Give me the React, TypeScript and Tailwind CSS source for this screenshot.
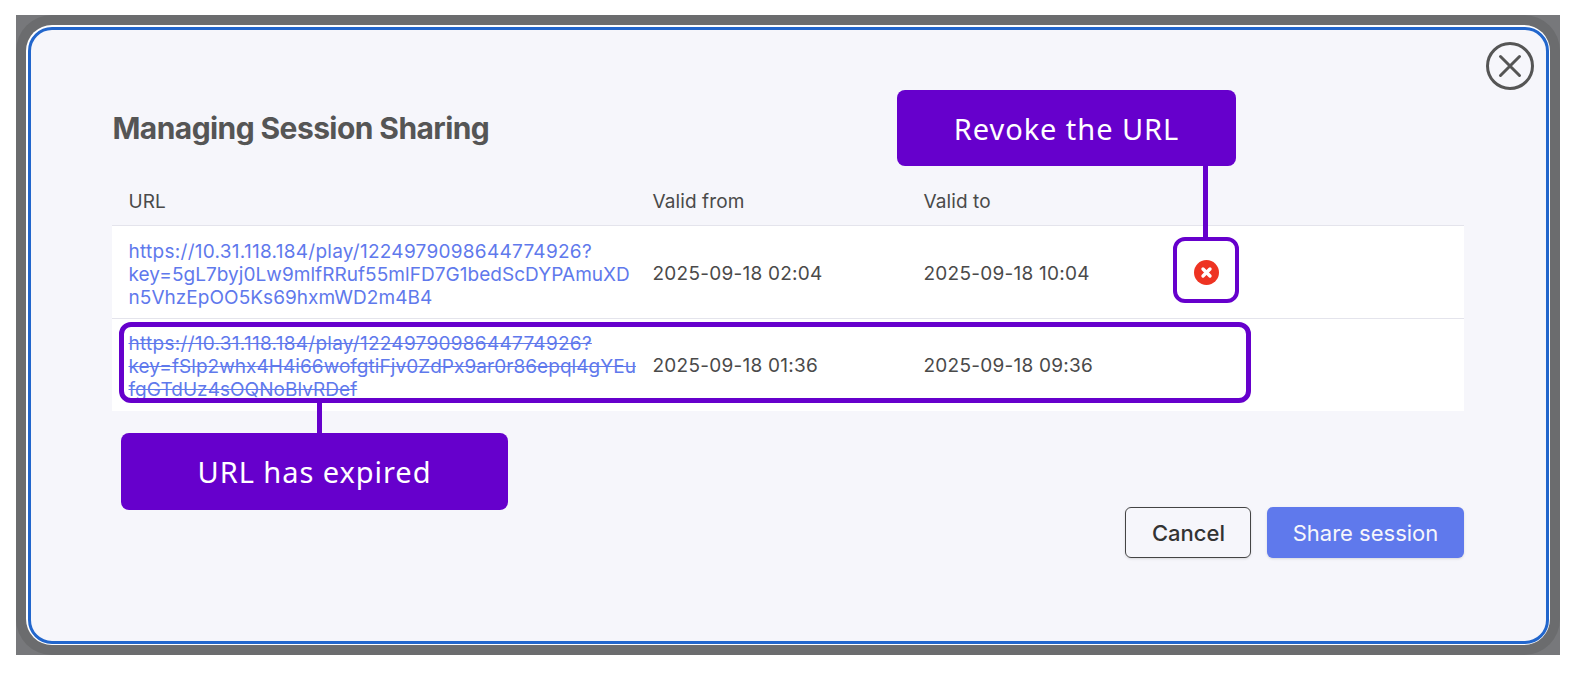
const rows = [
  {
    lines: ["https://10.31.118.184/play/1224979098644774926?", "key=5gL7byj0Lw9mlfRRuf55mlFD7G1bedScDYPAmuXD", "n5VhzEpOO5Ks69hxmWD2m4B4"],
    from: "2025-09-18 02:04",
    to: "2025-09-18 10:04",
    expired: false,
  },
  {
    lines: ["https://10.31.118.184/play/1224979098644774926?", "key=fSlp2whx4H4i66wofgtiFjv0ZdPx9ar0r86epql4gYEu", "fgGTdUz4sOQNoBlvRDef"],
    from: "2025-09-18 01:36",
    to: "2025-09-18 09:36",
    expired: true,
  },
];

function Callout({ label, className }: { label: string; className: string }) {
  return (
    <div
      className={`absolute z-10 flex items-center justify-center rounded-[8px] bg-[#6600cc] pt-[1px] text-[29px] tracking-[0.95px] text-white ${className}`}
      style={{ fontFamily: '"Noto Sans", sans-serif' }}
    >
      {label}
    </div>
  );
}

export default function App() {
  return (
    <div className="h-[679px] w-[1575px] bg-white pt-[15px] pl-[16px] font-['Inter',sans-serif]">
      <div className="relative h-[640px] w-[1544px] bg-[#77787b]">
        <div className="h-full rounded-[36px] bg-[#6b6c6e] pt-[10px] pl-[10px]">
          {/* Modal */}
          <div className="h-[620px] w-[1524px] rounded-[26px] bg-white p-[1.5px]">
            <div className="h-full rounded-[24px] border-[3px] border-[#2266cc] bg-[#f6f6fb] pt-[12px] pr-[12px] pl-[82px]">
              <div className="flex justify-end">
                <svg width="48" height="48" viewBox="0 0 48 48" fill="none" stroke="#555555" strokeWidth="3" strokeLinecap="round">
                  <circle cx="24" cy="24" r="22.5" />
                  <path d="M14.5 14.5L33.5 33.5M33.5 14.5L14.5 33.5" />
                </svg>
              </div>

              <h2 className="mt-[20px] text-[30px] leading-[36px] font-[650] tracking-[-0.58px] text-[#555555]">
                Managing Session Sharing
              </h2>

              {/* Table */}
              <div className="mt-[35.5px] -ml-[0.5px] w-[1352px] text-[19px] tracking-[0.1px] text-[#4a4a4a]">
                <div className="grid h-[44px] grid-cols-[524px_271px_1fr] items-center pb-[1px] pl-[16.5px]">
                  <span>URL</span>
                  <span>Valid from</span>
                  <span>Valid to</span>
                </div>
                {rows.map((row) => (
                  <div
                    key={row.from}
                    className={`grid h-[93px] grid-cols-[524px_271px_270px_1fr] items-center border-t border-[#e4e4ec] bg-white pl-[16.5px] ${row.expired ? "pt-[2px]" : "pt-[4px]"}`}
                  >
                    <div className={`leading-[23px] tracking-[0.05px] whitespace-nowrap text-[#5f79ec] ${row.expired ? "line-through" : ""}`}>
                      <div className="tracking-[0.28px]">{row.lines[0]}</div>
                      <div>{row.lines[1]}</div>
                      <div>{row.lines[2]}</div>
                    </div>
                    <span className="tracking-[0.25px]">{row.from}</span>
                    <span className="tracking-[0.25px]">{row.to}</span>
                    {!row.expired && (
                      <svg width="25" height="25" viewBox="0 0 25 25" className="-mt-[4px]">
                        <circle cx="12.5" cy="12.5" r="12.5" fill="#ee3322" />
                        <path d="M9 9L16 16M16 9L9 16" stroke="white" strokeWidth="3.4" strokeLinecap="round" />
                      </svg>
                    )}
                  </div>
                ))}
              </div>

              {/* Buttons */}
              <div className="mt-[96px] -ml-[0.5px] flex w-[1352px] justify-end gap-[16px] text-[22px]">
                <button className="h-[51px] w-[126px] rounded-[6px] border border-[#444444] pt-[1px] pl-[1px] font-medium text-[#333333] shadow-sm">
                  Cancel
                </button>
                <button className="h-[51px] w-[197px] rounded-[6px] bg-[#5f79ec] pt-[1px] text-[#f6f6fb] shadow-sm">
                  Share session
                </button>
              </div>
            </div>
          </div>
        </div>

        {/* Annotations */}
        <Callout label="Revoke the URL" className="top-[75px] left-[881px] h-[76px] w-[339px]" />
        <div className="absolute top-[151px] left-[1187px] h-[72px] w-[4.5px] bg-[#6600cc]" />
        <div className="absolute top-[222px] left-[1157px] h-[66px] w-[66px] rounded-[12px] border-[4.5px] border-[#6600cc]" />
        <div className="absolute top-[307px] left-[102.5px] h-[81px] w-[1132px] rounded-[12px] border-[5px] border-[#6600cc]" />
        <div className="absolute top-[387px] left-[301px] h-[32px] w-[4.5px] bg-[#6600cc]" />
        <Callout label="URL has expired" className="top-[418px] left-[105px] h-[77px] w-[387px]" />
      </div>
    </div>
  );
}
